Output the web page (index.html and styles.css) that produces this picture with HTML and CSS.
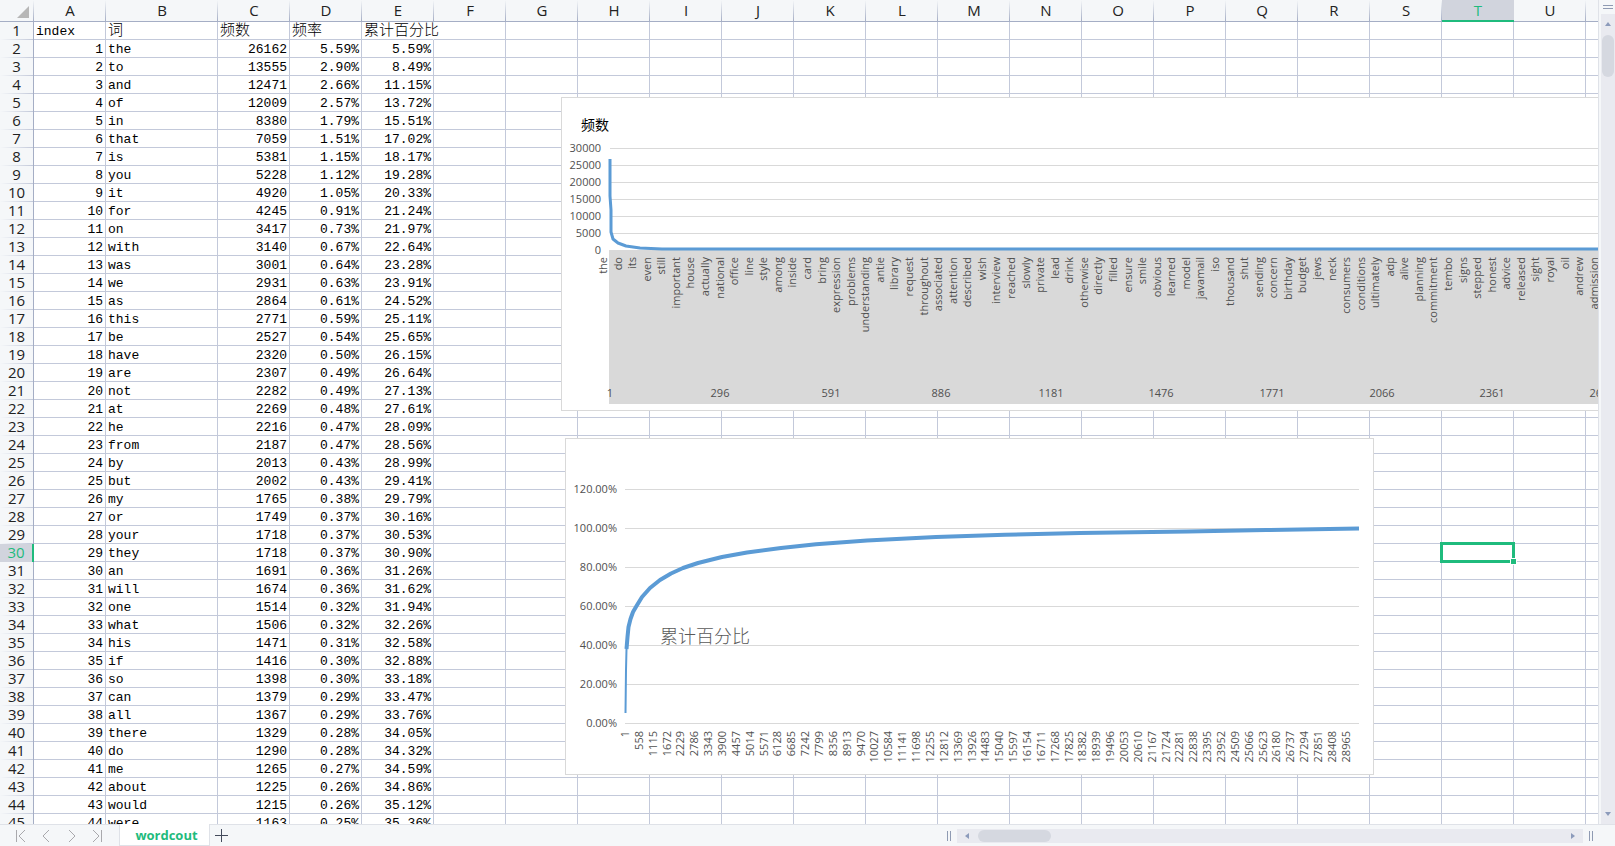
FILE: index.html
```html
<!DOCTYPE html>
<html lang="zh">
<head>
<meta charset="utf-8">
<title>wordcout</title>
<link rel="stylesheet" href="styles.css">
</head>
<body>
<main class="app">
  <div class="workspace">
    <div class="sheet">
      <table class="grid" id="grid"></table>
      <div class="selection"><span class="fill-handle"></span></div>
      <svg class="chart chart-freq" id="freq" width="1100" height="314" role="img" aria-label="频数"></svg>
      <svg class="chart chart-total" id="total" width="809" height="337" role="img" aria-label="累计百分比"></svg>
    </div>
    <div class="vscroll">
      <div class="split"></div>
      <div class="vtrack">
        <button class="arrow" aria-label="Scroll up"><svg width="8" height="4" viewBox="0 0 8 4"><path d="M4 0L7 4H1z"/></svg></button>
        <div class="vthumb"></div>
        <button class="arrow arrow-end" aria-label="Scroll down"><svg width="8" height="4" viewBox="0 0 8 4"><path d="M1 0H7L4 4z"/></svg></button>
      </div>
    </div>
  </div>
  <footer class="tabbar">
    <nav class="sheet-nav">
      <button aria-label="First sheet"><svg width="12" height="14" viewBox="0 0 12 14"><path d="M2.500 1v12M11 1L5 7l6 6"/></svg></button>
      <button aria-label="Previous sheet"><svg width="12" height="14" viewBox="0 0 12 14"><path d="M9 1L3 7l6 6"/></svg></button>
      <button aria-label="Next sheet"><svg width="12" height="14" viewBox="0 0 12 14"><path d="M3 1l6 6-6 6"/></svg></button>
      <button aria-label="Last sheet"><svg width="12" height="14" viewBox="0 0 12 14"><path d="M9.500 1v12M1 1l6 6-6 6"/></svg></button>
    </nav>
    <button class="tab">wordcout</button>
    <button class="add" aria-label="Add sheet"><svg width="13" height="13" viewBox="0 0 13 13"><path d="M6.500 0v13M0 6.500h13"/></svg></button>
    <div class="hscroll">
      <span class="grip"></span>
      <div class="htrack">
        <button class="arrow" aria-label="Scroll left"><svg width="4" height="8" viewBox="0 0 4 8"><path d="M0 4L4 1V7z"/></svg></button>
        <div class="hthumb"></div>
        <button class="arrow arrow-end" aria-label="Scroll right"><svg width="4" height="8" viewBox="0 0 4 8"><path d="M4 4L0 1V7z"/></svg></button>
      </div>
      <span class="grip"></span>
    </div>
  </footer>
</main>
<script src="app.js"></script>
</body>
</html>
```

FILE: styles.css
```css
* { box-sizing: border-box; }
body { margin: 0; font-family: "Open Sans", "Noto Sans CJK SC", sans-serif; background: #fff; }
button { border: 0; padding: 0; background: none; font: inherit; }
.app { display: flex; flex-direction: column; height: 100vh; overflow: hidden; }
.workspace { flex: 1; min-height: 0; display: flex; background: #f5f7f9; }
.sheet { position: relative; flex: 1; min-width: 0; overflow: hidden; background: #fff; border-right: 1px solid #dfe2e8; }

.grid { table-layout: fixed; border-collapse: separate; border-spacing: 0; width: 1658px; }
.col-head { width: 34px; }
.col { width: 72px; }
.col-wide { width: 112px; }
.grid th { padding: 0; font-size: 15px; font-weight: 400; color: #222; background-color: #f5f7f9; }
.grid thead th { height: 22px; line-height: 21px; border-bottom: 1px solid #a5aec5; background-image: linear-gradient(#f5f7f9, #a5aec5); background-size: 1px 100%; background-position: right; background-repeat: no-repeat; }
.grid tbody th { height: 18px; padding: 0 0 2px; line-height: 16px; border-right: 1px solid #a5aec5; background-image: linear-gradient(90deg, #f5f7f9, #c3c9da); background-size: 100% 1px; background-position: bottom; background-repeat: no-repeat; }
.grid thead .active { color: #1fbb7d; background: #d1d4dd; border-bottom: 2px solid #1fbb7d; line-height: 20px; }
.grid tbody .active { color: #1fbb7d; background: #d1d4dd; border-right: 2px solid #1fbb7d; }
.corner svg { display: block; margin: 2px 0 0 17px; fill: #b7b7b7; }
.grid td { height: 18px; padding: 3px 2px 0; border-right: 1px solid #c3c9da; border-bottom: 1px solid #c3c9da; font-family: "Liberation Mono", "Noto Sans CJK SC", monospace; font-size: 13px; line-height: 14px; color: #000; white-space: nowrap; }
.grid .num { text-align: right; }
.grid .title { font-size: 15px; font-weight: 300; }
.grid .latin { font-size: 13px; }
.grid .spill { border-right-color: transparent; overflow: visible; }

.selection { position: absolute; left: 1440px; top: 542px; width: 75px; height: 21px; border: 3px solid #1fbb7d; }
.fill-handle { position: absolute; right: -5px; bottom: -5px; width: 7px; height: 7px; background: #1fbb7d; border: 1px solid #fff; }

.chart { position: absolute; background: #fff; border: 1px solid #d9d9d9; }
.chart-freq { left: 561px; top: 97px; }
.chart-total { left: 565px; top: 438px; }
.chart text { font-size: 11px; fill: #505050; }
.chart .end { text-anchor: end; }
.chart .mid { text-anchor: middle; }
.chart .freq-title { font-size: 14px; fill: #000; }
.chart .total-title { font-size: 18px; font-weight: 300; fill: #595959; }
.rule { stroke: #d9d9d9; }
.band { fill: #d9d9d9; }
.line { fill: none; stroke: #5b9bd5; stroke-width: 3; stroke-linejoin: round; }
.line-thin { stroke-width: 2; }
.line-thick { stroke-width: 4; }

.vscroll { width: 16px; padding-left: 2px; display: flex; flex-direction: column; }
.split { height: 4px; margin: 5px 2px; border-top: 1px solid #8f9bb3; border-bottom: 1px solid #8f9bb3; }
.vtrack { flex: 1; display: flex; flex-direction: column; align-items: center; background: #e9eaf0; padding: 8px 0; }
.vtrack .arrow { height: 4px; }
.arrow { display: flex; }
.arrow svg { fill: #8c9bbb; }
.vthumb { width: 12px; height: 42px; margin-top: 9px; border-radius: 6px; background: #d5d8e0; }
.vtrack .arrow-end { margin-top: auto; }

.tabbar { display: flex; height: 22px; background: #f5f7f9; }
.sheet-nav { display: flex; width: 119px; padding-left: 14px; gap: 14px; border-top: 1px solid #dfe2e8; align-items: center; }
.sheet-nav svg { display: block; fill: none; stroke: #a9a9ad; }
.tab { width: 91px; padding-left: 4px; background: #fff; border: 1px solid #dfe2e8; border-top: 0; color: #1fbb7d; font-size: 13px; font-weight: 700; line-height: 20px; }
.add { width: 23px; display: grid; place-items: center; border-top: 1px solid #dfe2e8; }
.add svg { stroke: #444b5c; }
.hscroll { flex: 1; display: flex; align-items: center; justify-content: flex-end; gap: 6px; padding-right: 22px; border-top: 1px solid #dfe2e8; }
.grip { width: 4px; height: 10px; border: solid #8f9bb3; border-width: 0 1px; }
.htrack { width: 46%; height: 14px; display: flex; align-items: center; background: #e9eaf0; padding: 0 8px; }
.hthumb { width: 73px; height: 12px; margin-left: 9px; border-radius: 6px; background: #d5d8e0; }
.htrack .arrow-end { margin-left: auto; }
```

FILE: app.js
```js
const words = `the 26162 5.59 5.59
to 13555 2.90 8.49
and 12471 2.66 11.15
of 12009 2.57 13.72
in 8380 1.79 15.51
that 7059 1.51 17.02
is 5381 1.15 18.17
you 5228 1.12 19.28
it 4920 1.05 20.33
for 4245 0.91 21.24
on 3417 0.73 21.97
with 3140 0.67 22.64
was 3001 0.64 23.28
we 2931 0.63 23.91
as 2864 0.61 24.52
this 2771 0.59 25.11
be 2527 0.54 25.65
have 2320 0.50 26.15
are 2307 0.49 26.64
not 2282 0.49 27.13
at 2269 0.48 27.61
he 2216 0.47 28.09
from 2187 0.47 28.56
by 2013 0.43 28.99
but 2002 0.43 29.41
my 1765 0.38 29.79
or 1749 0.37 30.16
your 1718 0.37 30.53
they 1718 0.37 30.90
an 1691 0.36 31.26
will 1674 0.36 31.62
one 1514 0.32 31.94
what 1506 0.32 32.26
his 1471 0.31 32.58
if 1416 0.30 32.88
so 1398 0.30 33.18
can 1379 0.29 33.47
all 1367 0.29 33.76
there 1329 0.28 34.05
do 1290 0.28 34.32
me 1265 0.27 34.59
about 1225 0.26 34.86
would 1215 0.26 35.12
were 1163 0.25 35.36`.split('\n').map(r => r.split(' '));

const letters = [...'ABCDEFGHIJKLMNOPQRSTU', ''];
const blanks = '<td></td>'.repeat(17);
let html = '<colgroup><col class="col-head">' +
  letters.map(l => `<col class="${l === 'B' ? 'col-wide' : 'col'}">`).join('') + '</colgroup>';
html += '<thead><tr><th class="corner"><svg width="12" height="12" viewBox="0 0 12 12"><path d="M12 0V12H0z"/></svg></th>' +
  letters.map(l => `<th scope="col"${l === 'T' ? ' class="active"' : ''}>${l}</th>`).join('') + '</tr></thead><tbody>';
html += '<tr><th scope="row">1</th><td class="title latin">index</td><td class="title">词</td><td class="title">频数</td><td class="title">频率</td><td class="title spill">累计百分比</td>' + blanks + '</tr>';
words.forEach(([word, count, share, total], i) => {
  html += `<tr><th scope="row"${i === 28 ? ' class="active"' : ''}>${i + 2}</th><td class="num">${i + 1}</td><td>${word}</td>` +
    `<td class="num">${count}</td><td class="num">${share}%</td><td class="num">${total}%</td>${blanks}</tr>`;
});
document.getElementById('grid').innerHTML = html + '</tbody>';

const text = (x, y, s, cls) => `<text x="${x}" y="${y}" class="${cls}">${s}</text>`;
const turned = (x, y, s) => `<text class="end" transform="translate(${x} ${y}) rotate(-90)">${s}</text>`;
const rule = (x1, x2, y) => `<path class="rule" d="M${x1} ${y + 0.5}H${x2}"/>`;

// Word frequency
const axisWords = ('the do its even still important house actually national office line style among inside card bring expression problems understanding antie library request throughout associated attention described wish interview reached slowly private lead drink otherwise directly filled ensure smile obvious learned model javamail iso thousand shut sending concern birthday budget jews neck consumers conditions ultimately adp alive planning commitment tembo signs stepped honest advice released sight royal oil andrew admission').split(' ');
let f = text(19, 32, '频数', 'freq-title');
for (let i = 0; i < 7; i++) {
  const y = 50 + i * 17;
  f += rule(48, 1090, y) + text(39, y + 4, 30000 - i * 5000, 'end');
}
f += '<rect class="band" x="47" y="152" width="1050" height="154"/>';
axisWords.forEach((w, i) => { f += turned(Math.round(45 + i * 14.57), 159, w); });
for (let i = 0; i < 10; i++) f += text(Math.round(48 + i * 110.25), 299, 1 + i * 295, 'mid');
f += '<path class="line" d="M48 61V98L49 112L49 134L51 141L56 145L64 148L78 150L100 151H1100"/>';
document.getElementById('freq').innerHTML = f;

// Cumulative share
let t = '';
for (let i = 0; i < 7; i++) {
  const y = 50 + i * 39;
  t += rule(59, 793, y) + text(51, y + 4, (120 - i * 20) + '.00%', 'end');
}
for (let i = 0; i < 53; i++) t += turned(Math.round(63 + i * 13.86), 292, 1 + i * 557);
const start = [[59.5, 274], [60, 231], [60.5, 210], [61.5, 198]];
const curve = [[60.5, 210], [61.5, 198], [62.5, 188], [64.5, 180], [67, 173], [70.5, 167], [76, 158], [84, 149], [94, 141], [105, 134.5], [117, 129], [132, 124], [156, 118], [181, 113.5], [215, 109], [250, 105.3], [301, 101.5], [370, 98], [439, 95.8], [514, 94], [622, 92.5], [700, 91], [793, 89.5]];
const path = pts => 'M' + pts.map(p => p.join(' ')).join('L');
t += `<path class="line line-thin" d="${path(start)}"/><path class="line line-thick" d="${path(curve)}"/>`;
t += text(94, 204, '累计百分比', 'total-title');
document.getElementById('total').innerHTML = t;
```
